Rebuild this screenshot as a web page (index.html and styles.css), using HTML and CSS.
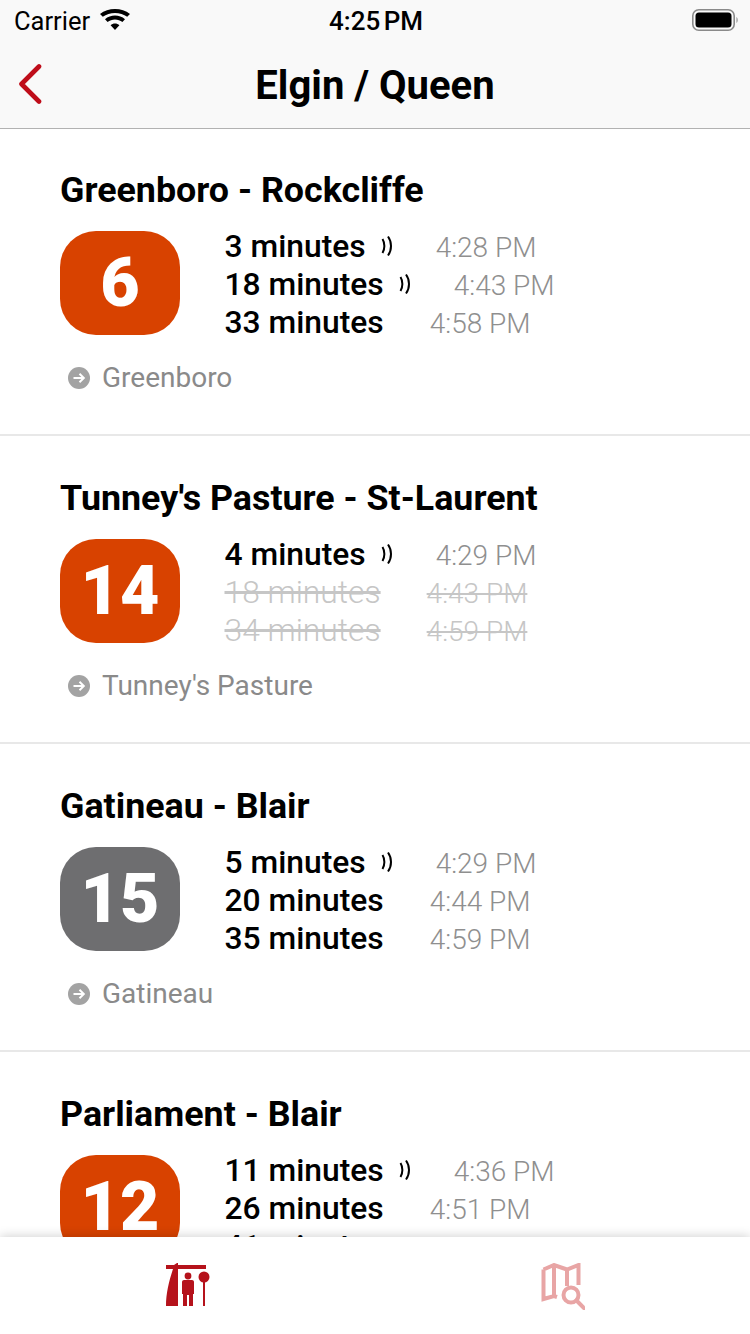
FILE: index.html
```html
<!DOCTYPE html>
<html>
<head>
<title>Elgin / Queen</title>
<meta charset="utf-8" />
<link rel="stylesheet" href="styles.css">
</head>
<body>
<div class="app">
  <div class="top">
    <div class="status">
      <div class="status-left">
        <span>Carrier</span>
        <svg class="wifi" width="30" height="22" viewBox="0 0 30 22"><path d="M15 21 L10.6 16.2 C13 14 17 14 19.4 16.2 Z M7.6 13 L5 10.2 C10.4 5.4 19.6 5.4 25 10.2 L22.4 13 C18.4 9.6 11.6 9.6 7.6 13 Z M2.8 7.8 L0 5 C8.2 -1.6 21.8 -1.6 30 5 L27.2 7.8 C20.6 2.6 9.4 2.6 2.8 7.8 Z" fill="#000"/></svg>
      </div>
      <div class="clock">4:25 PM</div>
      <div class="status-right">
        <svg width="46" height="22" viewBox="0 0 46 22"><rect x="0.8" y="0.8" width="41.4" height="20.4" rx="6" fill="none" stroke="#8a8a8a" stroke-width="1.6"/><rect x="3.5" y="3.5" width="36" height="15" rx="3.5" fill="#000"/><path d="M44.5 8 C46 9 46 13 44.5 14 Z" fill="#8a8a8a"/></svg>
      </div>
    </div>
    <div class="nav">
      <svg class="back" width="24" height="40" viewBox="0 0 24 40"><path d="M21 2.5 L3.5 20 L21 37.5" fill="none" stroke="#bf0d1a" stroke-width="4.6" stroke-linecap="round" stroke-linejoin="round"/></svg>
      <h1>Elgin / Queen</h1>
    </div>
  </div>

  <div class="list">
    <div class="route">
      <div class="route-name">Greenboro - Rockcliffe</div>
      <div class="route-main">
        <div class="badge">6</div>
        <div class="times">
          <div class="line"><span class="mins">3 minutes</span><svg class="live" width="24" height="24" viewBox="0 0 24 24"><path d="M16.5 5 C19 9 19 15 16.5 19 M22 2.5 C26 8 26 16 22 21.5" /></svg><span class="clock-time">4:28 PM</span></div>
          <div class="line"><span class="mins">18 minutes</span><svg class="live" width="24" height="24" viewBox="0 0 24 24"><path d="M16.5 5 C19 9 19 15 16.5 19 M22 2.5 C26 8 26 16 22 21.5" /></svg><span class="clock-time">4:43 PM</span></div>
          <div class="line"><span class="mins">33 minutes</span><span class="clock-time">4:58 PM</span></div>
        </div>
      </div>
      <div class="dest"><svg width="22" height="22" viewBox="0 0 22 22"><circle cx="11" cy="11" r="11" fill="#a3a3a3"/><path d="M5.5 11 H15.5 M11.5 6.8 L15.8 11 L11.5 15.2" fill="none" stroke="#fff" stroke-width="2"/></svg><span>Greenboro</span></div>
    </div>

    <div class="route">
      <div class="route-name">Tunney's Pasture - St-Laurent</div>
      <div class="route-main">
        <div class="badge">14</div>
        <div class="times">
          <div class="line"><span class="mins">4 minutes</span><svg class="live" width="24" height="24" viewBox="0 0 24 24"><path d="M16.5 5 C19 9 19 15 16.5 19 M22 2.5 C26 8 26 16 22 21.5" /></svg><span class="clock-time">4:29 PM</span></div>
          <div class="line cancelled"><span class="mins">18 minutes</span><span class="clock-time">4:43 PM</span></div>
          <div class="line cancelled"><span class="mins">34 minutes</span><span class="clock-time">4:59 PM</span></div>
        </div>
      </div>
      <div class="dest"><svg width="22" height="22" viewBox="0 0 22 22"><circle cx="11" cy="11" r="11" fill="#a3a3a3"/><path d="M5.5 11 H15.5 M11.5 6.8 L15.8 11 L11.5 15.2" fill="none" stroke="#fff" stroke-width="2"/></svg><span>Tunney's Pasture</span></div>
    </div>

    <div class="route">
      <div class="route-name">Gatineau - Blair</div>
      <div class="route-main">
        <div class="badge grey">15</div>
        <div class="times">
          <div class="line"><span class="mins">5 minutes</span><svg class="live" width="24" height="24" viewBox="0 0 24 24"><path d="M16.5 5 C19 9 19 15 16.5 19 M22 2.5 C26 8 26 16 22 21.5" /></svg><span class="clock-time">4:29 PM</span></div>
          <div class="line"><span class="mins">20 minutes</span><span class="clock-time">4:44 PM</span></div>
          <div class="line"><span class="mins">35 minutes</span><span class="clock-time">4:59 PM</span></div>
        </div>
      </div>
      <div class="dest"><svg width="22" height="22" viewBox="0 0 22 22"><circle cx="11" cy="11" r="11" fill="#a3a3a3"/><path d="M5.5 11 H15.5 M11.5 6.8 L15.8 11 L11.5 15.2" fill="none" stroke="#fff" stroke-width="2"/></svg><span>Gatineau</span></div>
    </div>

    <div class="route">
      <div class="route-name">Parliament - Blair</div>
      <div class="route-main">
        <div class="badge">12</div>
        <div class="times">
          <div class="line"><span class="mins">11 minutes</span><svg class="live" width="24" height="24" viewBox="0 0 24 24"><path d="M16.5 5 C19 9 19 15 16.5 19 M22 2.5 C26 8 26 16 22 21.5" /></svg><span class="clock-time">4:36 PM</span></div>
          <div class="line"><span class="mins">26 minutes</span><span class="clock-time">4:51 PM</span></div>
          <div class="line"><span class="mins">41 minutes</span><span class="clock-time">5:06 PM</span></div>
        </div>
      </div>
    </div>
  </div>

  <div class="tabbar">
    <div class="tab">
      <svg width="44" height="44" viewBox="0 0 44 44" fill="#b5121b"><path d="M0 2 H8 L11 0 H12 V2 H40 V6 H12 V43 H0 C0 30 3 18 7 6 H0 Z"/><circle cx="22" cy="13" r="3.4"/><path d="M16 19 C16 17.8 17 17 18 17 H26 C27 17 28 17.8 28 19 V31 H27 V43 H23 V32 H21 V43 H17 V31 H16 Z"/><circle cx="38" cy="14" r="5.5"/><rect x="37" y="18" width="2" height="25"/></svg>
    </div>
    <div class="tab">
      <svg width="44" height="47" viewBox="0 0 44 47" fill="none" stroke="#e8a5a5" stroke-width="4"><path d="M2.5 6.5 L13 2 L26 6.5 L37.5 2 V22 M2.5 6.5 V36 L13 33 L16 34 M13 2 V33 M26 6.5 V23"/><circle cx="30" cy="32" r="7.5"/><path d="M35.5 37.5 L43 45" stroke-linecap="round"/></svg>
    </div>
  </div>
</div>
</body>
</html>
```

FILE: styles.css
```css
*{
  margin:0;
  padding:0;
  box-sizing:border-box;
}
body{
  font-family:Roboto,"Liberation Sans",sans-serif;
  background:#fff;
  color:#000;
}
.app{
  width:750px;
  height:1334px;
  display:flex;
  flex-direction:column;
  overflow:hidden;
}

/* top bars */
.top{
  background:#f9f9f9;
  border-bottom:1px solid #b2b2b2;
  height:129px;
  margin-bottom:-1px;
}
.status{
  height:40px;
  padding:2px 12px 0 14px;
  display:flex;
  align-items:center;
  font-size:25.5px;
}
.status-left,.status-right{
  flex:1;
  display:flex;
  align-items:center;
}
.status-left{
  gap:10px;
}
.status-right{
  justify-content:flex-end;
}
.wifi{
  display:block;
  margin-top:-3px;
}
.clock{
  font-size:26px;
  font-weight:500;
  word-spacing:-3px;
}
.status-right svg{
  display:block;
  margin-top:-2px;
}
.nav{
  height:88px;
  padding-top:3px;
  display:flex;
  align-items:center;
  justify-content:center;
  position:relative;
}
.nav h1{
  font-size:40px;
  font-weight:700;
}
.back{
  position:absolute;
  left:18px;
  top:24px;
}

/* list */
.list{
  flex:1;
  overflow:hidden;
}
.route{
  height:308px;
  padding:41px 0 0 60px;
  border-bottom:2px solid #e8e8e8;
}
.route-name{
  font-size:35.8px;
  font-weight:700;
  line-height:42px;
}
.route-main{
  display:flex;
  margin-top:20px;
}
.badge{
  width:120px;
  height:104px;
  border-radius:36px;
  background:#d84200;
  color:#fff;
  font-size:68px;
  font-weight:900;
  display:flex;
  align-items:center;
  justify-content:center;
}
.badge.grey{
  background:#6e6e70;
}
.times{
  margin-left:44.5px;
  margin-top:-4px;
}
.line{
  display:flex;
  align-items:center;
  height:38px;
}
.mins{
  font-size:31.8px;
  font-weight:500;
}
.clock-time{
  font-size:28px;
  font-weight:300;
  color:#8f8f8f;
  margin-left:46px;
  margin-top:2px;
}
.live{
  overflow:visible;
}
.live path{
  fill:none;
  stroke:#000;
  stroke-width:2;
}
.cancelled .mins{
  font-weight:300;
  color:#c6c6c6;
  text-decoration:line-through;
}
.cancelled .clock-time{
  color:#c6c6c6;
  text-decoration:line-through;
}
.dest{
  display:flex;
  align-items:center;
  margin:20px 0 0 8px;
  font-size:28px;
  color:#8a8a8a;
  gap:12px;
}

/* tabs */
.tabbar{
  height:97px;
  flex:none;
  background:#fff;
  display:flex;
  padding-top:26px;
  box-shadow:0 -1px 10px rgba(0,0,0,.18);
  position:relative;
}
.tab{
  flex:1;
  display:flex;
  justify-content:center;
  align-items:flex-start;
}
```
